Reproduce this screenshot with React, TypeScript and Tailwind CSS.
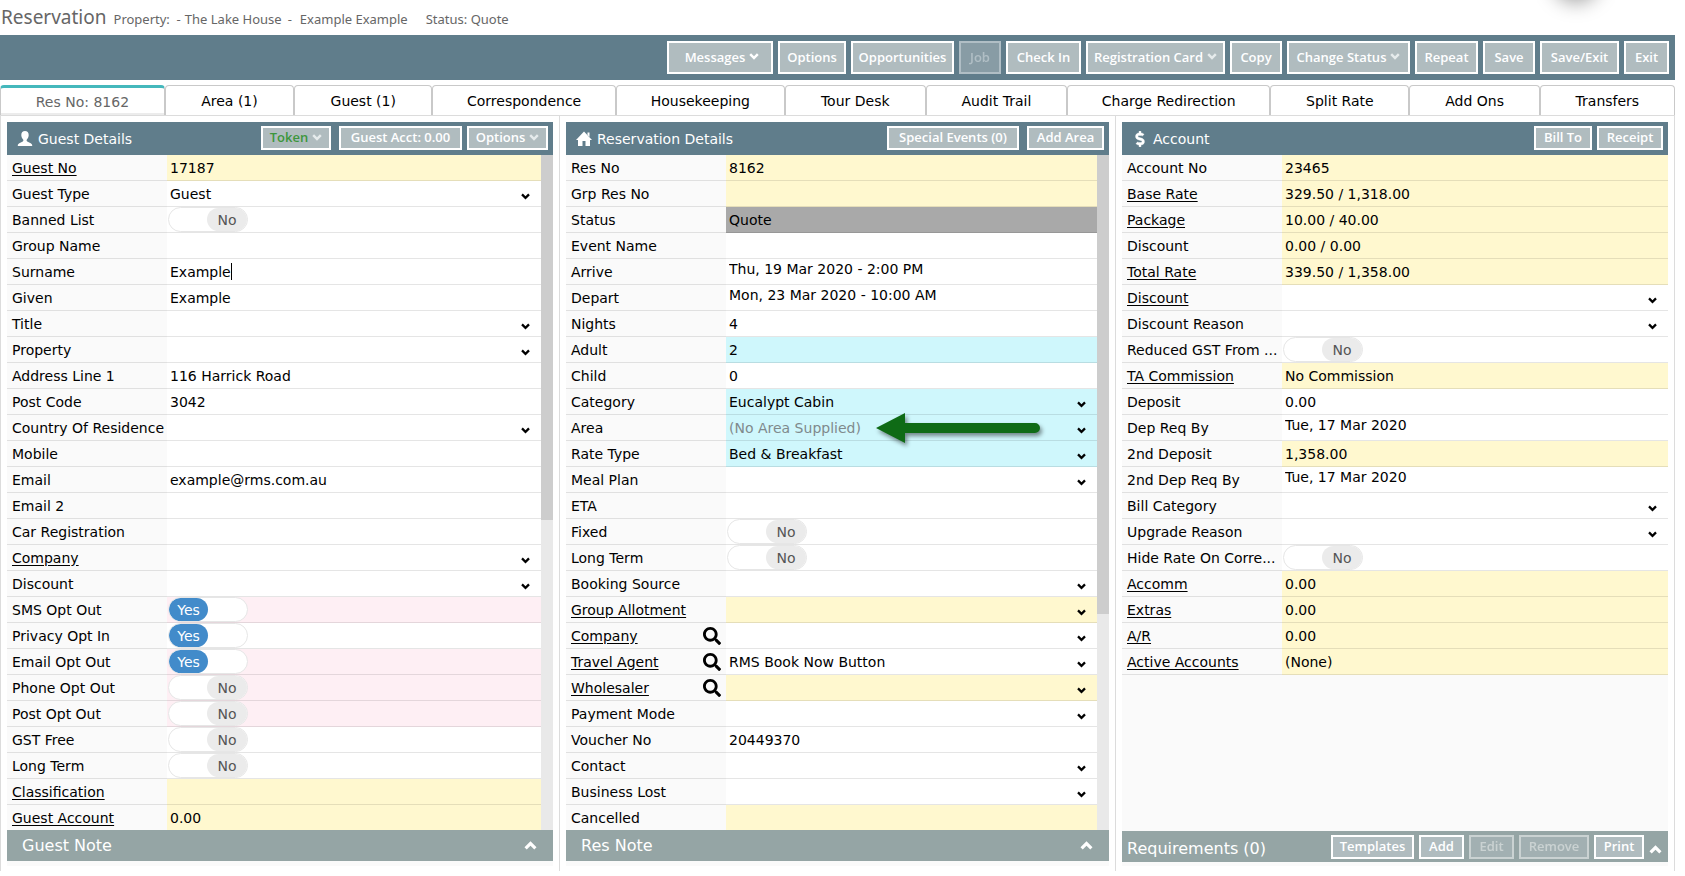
import React, { useId } from 'react';
import { FaDollarSign, FaSearch } from 'react-icons/fa';
import clsx from 'clsx';

type Tone = 'plain' | 'yellow' | 'cyan' | 'gray' | 'pink';

interface Field {
  label: string;
  value?: string;
  kind?: 'text' | 'select' | 'toggle' | 'date' | 'readonly';
  tone?: Tone;
  link?: boolean;
  on?: boolean;
  search?: boolean;
  muted?: boolean;
  caret?: boolean;
  arrow?: boolean;
}

const tones: Record<Tone, string> = {
  plain: 'bg-white',
  yellow: 'bg-[#fff8cf]',
  cyan: 'bg-[#cff7fc]',
  gray: 'bg-[#a9a9a9]',
  pink: 'bg-[#feeff4]',
};

const guestFields: Field[] = [
  { label: 'Guest No', value: '17187', kind: 'readonly', tone: 'yellow', link: true },
  { label: 'Guest Type', value: 'Guest', kind: 'select' },
  { label: 'Banned List', kind: 'toggle' },
  { label: 'Group Name' },
  { label: 'Surname', value: 'Example', caret: true },
  { label: 'Given', value: 'Example' },
  { label: 'Title', kind: 'select' },
  { label: 'Property', kind: 'select' },
  { label: 'Address Line 1', value: '116 Harrick Road' },
  { label: 'Post Code', value: '3042' },
  { label: 'Country Of Residence', kind: 'select' },
  { label: 'Mobile' },
  { label: 'Email', value: 'example@rms.com.au' },
  { label: 'Email 2' },
  { label: 'Car Registration' },
  { label: 'Company', kind: 'select', link: true },
  { label: 'Discount', kind: 'select' },
  { label: 'SMS Opt Out', kind: 'toggle', on: true, tone: 'pink' },
  { label: 'Privacy Opt In', kind: 'toggle', on: true },
  { label: 'Email Opt Out', kind: 'toggle', on: true, tone: 'pink' },
  { label: 'Phone Opt Out', kind: 'toggle', tone: 'pink' },
  { label: 'Post Opt Out', kind: 'toggle', tone: 'pink' },
  { label: 'GST Free', kind: 'toggle' },
  { label: 'Long Term', kind: 'toggle' },
  { label: 'Classification', kind: 'readonly', tone: 'yellow', link: true },
  { label: 'Guest Account', value: '0.00', kind: 'readonly', tone: 'yellow', link: true },
];

const reservationFields: Field[] = [
  { label: 'Res No', value: '8162', kind: 'readonly', tone: 'yellow' },
  { label: 'Grp Res No', kind: 'readonly', tone: 'yellow' },
  { label: 'Status', value: 'Quote', kind: 'readonly', tone: 'gray' },
  { label: 'Event Name' },
  { label: 'Arrive', value: 'Thu, 19 Mar 2020 - 2:00 PM', kind: 'date' },
  { label: 'Depart', value: 'Mon, 23 Mar 2020 - 10:00 AM', kind: 'date' },
  { label: 'Nights', value: '4' },
  { label: 'Adult', value: '2', tone: 'cyan' },
  { label: 'Child', value: '0' },
  { label: 'Category', value: 'Eucalypt Cabin', kind: 'select', tone: 'cyan' },
  { label: 'Area', value: '(No Area Supplied)', kind: 'select', tone: 'cyan', muted: true, arrow: true },
  { label: 'Rate Type', value: 'Bed & Breakfast', kind: 'select', tone: 'cyan' },
  { label: 'Meal Plan', kind: 'select' },
  { label: 'ETA' },
  { label: 'Fixed', kind: 'toggle' },
  { label: 'Long Term', kind: 'toggle' },
  { label: 'Booking Source', kind: 'select' },
  { label: 'Group Allotment', kind: 'select', tone: 'yellow', link: true },
  { label: 'Company', kind: 'select', link: true, search: true },
  { label: 'Travel Agent', value: 'RMS Book Now Button', kind: 'select', link: true, search: true },
  { label: 'Wholesaler', kind: 'select', tone: 'yellow', link: true, search: true },
  { label: 'Payment Mode', kind: 'select' },
  { label: 'Voucher No', value: '20449370' },
  { label: 'Contact', kind: 'select' },
  { label: 'Business Lost', kind: 'select' },
  { label: 'Cancelled', kind: 'readonly', tone: 'yellow' },
];

const accountFields: Field[] = [
  { label: 'Account No', value: '23465', kind: 'readonly', tone: 'yellow' },
  { label: 'Base Rate', value: '329.50 / 1,318.00', kind: 'readonly', tone: 'yellow', link: true },
  { label: 'Package', value: '10.00 / 40.00', kind: 'readonly', tone: 'yellow', link: true },
  { label: 'Discount', value: '0.00 / 0.00', kind: 'readonly', tone: 'yellow' },
  { label: 'Total Rate', value: '339.50 / 1,358.00', kind: 'readonly', tone: 'yellow', link: true },
  { label: 'Discount', kind: 'select', link: true },
  { label: 'Discount Reason', kind: 'select' },
  { label: 'Reduced GST From ...', kind: 'toggle' },
  { label: 'TA Commission', value: 'No Commission', kind: 'readonly', tone: 'yellow', link: true },
  { label: 'Deposit', value: '0.00' },
  { label: 'Dep Req By', value: 'Tue, 17 Mar 2020', kind: 'date' },
  { label: '2nd Deposit', value: '1,358.00', kind: 'readonly', tone: 'yellow' },
  { label: '2nd Dep Req By', value: 'Tue, 17 Mar 2020', kind: 'date' },
  { label: 'Bill Category', kind: 'select' },
  { label: 'Upgrade Reason', kind: 'select' },
  { label: 'Hide Rate On Corre...', kind: 'toggle' },
  { label: 'Accomm', value: '0.00', kind: 'readonly', tone: 'yellow', link: true },
  { label: 'Extras', value: '0.00', kind: 'readonly', tone: 'yellow', link: true },
  { label: 'A/R', value: '0.00', kind: 'readonly', tone: 'yellow', link: true },
  { label: 'Active Accounts', value: '(None)', kind: 'readonly', tone: 'yellow', link: true },
];

const tabs = [
  { label: 'Res No: 8162', grow: 'grow-[165]' },
  { label: 'Area (1)', grow: 'grow-[129]' },
  { label: 'Guest (1)', grow: 'grow-[138]' },
  { label: 'Correspondence', grow: 'grow-[184]' },
  { label: 'Housekeeping', grow: 'grow-[169]' },
  { label: 'Tour Desk', grow: 'grow-[141]' },
  { label: 'Audit Trail', grow: 'grow-[141]' },
  { label: 'Charge Redirection', grow: 'grow-[204]' },
  { label: 'Split Rate', grow: 'grow-[139]' },
  { label: 'Add Ons', grow: 'grow-[130]' },
  { label: 'Transfers', grow: 'grow-[135]' },
];

interface ActionProps {
  label: string;
  width: string;
  menu?: boolean;
  disabled?: boolean;
  tall?: boolean;
  green?: boolean;
}

const toolbar: ActionProps[] = [
  { label: 'Messages', width: 'w-[106px] pl-1', menu: true },
  { label: 'Options', width: 'w-[68px]' },
  { label: 'Opportunities', width: 'w-[103px]' },
  { label: 'Job', width: 'w-[42px]', disabled: true },
  { label: 'Check In', width: 'w-[75px]' },
  { label: 'Registration Card', width: 'w-[139px]', menu: true },
  { label: 'Copy', width: 'w-[52px]' },
  { label: 'Change Status', width: 'w-[123px]', menu: true },
  { label: 'Repeat', width: 'w-[63px]' },
  { label: 'Save', width: 'w-[52px]' },
  { label: 'Save/Exit', width: 'w-[79px]' },
  { label: 'Exit', width: 'w-[45px]' },
];

function Chevron({ className }: { className?: string }) {
  return (
    <svg viewBox="0 0 14 10" className={className} fill="currentColor" aria-hidden="true">
      <path d="M.3 3 2.800.500 7 4.600 11.200.500 13.700 3 7 9.700z" />
    </svg>
  );
}

function Action({ label, width, menu, disabled, tall, green }: ActionProps) {
  return (
    <button
      type="button"
      disabled={disabled}
      className={clsx(
        'flex shrink-0 items-center justify-center gap-1 border-2 border-white bg-[#b0bcbf] pb-0.5 font-["Open_Sans",sans-serif] text-[13px] leading-4 font-semibold whitespace-nowrap',
        tall ? 'h-[33px]' : 'h-6',
        green ? 'text-[#3c963c]' : 'text-white',
        disabled && 'opacity-50',
        width,
      )}
    >
      {label}
      {menu && <Chevron className={clsx('h-[7px] w-2.5', label === 'Messages' ? 'text-white' : 'text-[#e6ebec]')} />}
    </button>
  );
}

function Toggle({ id, on }: { id: string; on?: boolean }) {
  return (
    <label className="ml-px flex h-[25px] w-20 cursor-pointer overflow-hidden rounded-full border border-[#e6e6e6] bg-white">
      <input id={id} type="checkbox" defaultChecked={on} className="peer sr-only" />
      <span className="hidden w-[39px] items-center justify-center rounded-full bg-[#428bca] text-white peer-checked:flex">
        Yes
      </span>
      <span className="ml-auto flex w-10 items-center justify-center rounded-full bg-[#ebebeb] text-[#555] peer-checked:hidden">
        No
      </span>
    </label>
  );
}

function PointerArrow() {
  return (
    <svg
      viewBox="0 0 170 38"
      className="pointer-events-none absolute -top-0.5 left-[150px] z-10 h-[38px] w-[170px] drop-shadow-[2px_3px_2px_rgba(0,0,0,0.45)]"
      aria-hidden="true"
    >
      <path d="M0 15 29 0v10h130a5 5 0 0 1 0 10H29v10z" fill="#0f6b16" />
    </svg>
  );
}

function FieldRow({ field }: { field: Field }) {
  const id = useId();
  const { label, value = '', kind = 'text', tone = 'plain' } = field;
  const box = 'h-full min-w-0 bg-transparent pl-[3px] outline-none';

  return (
    <div className="flex h-[26px] shrink-0">
      <div className="flex w-40 shrink-0 items-center justify-between border-b border-black/10 bg-[#fafafa] px-[5px] whitespace-nowrap">
        <label htmlFor={id}>
          {field.link ? (
            <a href="#" className="underline underline-offset-2">
              {label}
            </a>
          ) : (
            label
          )}
        </label>
        {field.search && (
          <button type="button" aria-label={`Search ${label}`}>
            <FaSearch className="size-[18px]" />
          </button>
        )}
      </div>
      <div className={clsx('relative flex min-w-0 flex-1 items-center border-b border-black/10', tones[tone])}>
        {kind === 'toggle' && <Toggle id={id} on={field.on} />}
        {kind === 'select' && (
          <>
            <select
              id={id}
              defaultValue={value}
              className={clsx(box, 'w-full appearance-none', field.muted && 'text-[#7f8a8c]')}
            >
              <option value={value}>{value}</option>
            </select>
            <Chevron className="pointer-events-none absolute top-3 right-[11px] h-[7px] w-[9px]" />
          </>
        )}
        {(kind === 'text' || kind === 'readonly' || kind === 'date') && (
          <input
            id={id}
            type="text"
            defaultValue={value}
            readOnly={kind === 'readonly'}
            className={clsx(box, field.caret ? 'field-sizing-content' : 'w-full', kind === 'date' && 'pb-1.5')}
          />
        )}
        {field.caret && <span className="h-[17px] w-px bg-black" />}
        {field.arrow && <PointerArrow />}
      </div>
    </div>
  );
}

interface PanelProps {
  title: string;
  icon: React.ReactNode;
  actions: React.ReactNode;
  fields: Field[];
  thumb?: string;
  footer: React.ReactNode;
}

function Panel({ title, icon, actions, fields, thumb, footer }: PanelProps) {
  return (
    <section className="flex min-h-0 min-w-0 flex-col border-r border-[#dcdcdc] px-1.5 pt-1.5">
      <header className="flex h-[33px] shrink-0 items-center justify-between bg-[#607d8b] pr-[5px] pl-2.5 text-white">
        <div className="flex items-center gap-[5px]">
          {icon}
          <h2>{title}</h2>
        </div>
        <div className="flex pb-px">{actions}</div>
      </header>
      <div className="flex min-h-0 flex-1 bg-[#fafafa]">
        <div className="flex min-w-0 flex-1 flex-col overflow-hidden">
          {fields.map((field, index) => (
            <FieldRow key={index} field={field} />
          ))}
        </div>
        {thumb && (
          <div className="w-3 shrink-0 bg-[#e9e9e9]">
            <div className={clsx('bg-[#cdcdcd]', thumb)} />
          </div>
        )}
      </div>
      {footer}
    </section>
  );
}

function NoteBar({ title }: { title: string }) {
  return (
    <>
      <button
        type="button"
        className="flex h-[31px] shrink-0 items-center justify-between bg-[#95a5a5] pr-4 pl-[15px] text-base text-white"
      >
        <span>{title}</span>
        <Chevron className="h-[9px] w-[13px] rotate-180" />
      </button>
      <div className="mb-[5px] h-[5px] shrink-0 bg-[#fafafa]" />
    </>
  );
}

function UserIcon() {
  return (
    <svg viewBox="0 0 16 16" className="size-4" fill="currentColor" aria-hidden="true">
      <path d="M8 0c2.300 0 3.700 1.600 3.700 4 0 1.700-.7 3.500-1.800 4.500-.5.500-.4 1.500.3 1.900l3.500 1.800c.9.500 1.500 1.200 1.500 2.100V15H.8v-.7c0-.9.6-1.600 1.500-2.100l3.500-1.800c.7-.4.8-1.400.3-1.900C5 7.500 4.300 5.700 4.300 4 4.300 1.600 5.700 0 8 0z" />
    </svg>
  );
}

function HomeIcon() {
  return (
    <svg viewBox="0 0 16 16" className="size-4" fill="currentColor" aria-hidden="true">
      <path d="M8 .5 16 9h-2v6H9.500v-5h-3v5H2V9H0l8-8.500z" />
      <path d="M11.500 1.500h2V6l-2-2z" />
    </svg>
  );
}

export default function App() {
  return (
    <div className="relative flex h-screen min-h-[640px] flex-col overflow-hidden bg-white pr-2.5 pb-[5px] font-['DejaVu_Sans',sans-serif] text-sm leading-5 text-black">
      {/* Title */}
      <div className="flex h-[35px] shrink-0 items-baseline pt-[5px] pl-px font-['Noto_Sans',sans-serif] text-[13px] text-[#666]">
        <h1 className="mr-[7px] text-[19px] leading-6">Reservation</h1>
        <span>Property: &nbsp;-</span>
        <span className="ml-1">The Lake House</span>
        <span className="ml-1.5">-</span>
        <span className="ml-2">Example Example</span>
        <span className="ml-[18px]">Status: Quote</span>
      </div>
      <div className="absolute -top-12 right-[86px] size-[46px] rounded-full shadow-[0_4px_20px_rgba(0,0,0,0.4)]" />

      {/* Toolbar */}
      <div className="flex h-[45px] shrink-0 items-center justify-end gap-[5px] bg-[#607d8b] pr-1.5">
        {toolbar.map((item) => (
          <Action key={item.label} {...item} tall />
        ))}
      </div>

      {/* Tabs */}
      <nav className="mt-[5px] flex h-[31px] shrink-0 border-b border-[#dcdcdc]">
        {tabs.map((tab, index) => (
          <button
            key={tab.label}
            type="button"
            className={clsx(
              'min-w-0 basis-0 rounded-t border border-b-0 border-[#c9c9c9] whitespace-nowrap',
              tab.grow,
              index === 0 && 'border-t-3 border-t-[#45b8bc] text-[#666] shadow-[inset_0_-2px_0_#ececec]',
            )}
          >
            {tab.label}
          </button>
        ))}
      </nav>

      {/* Panels */}
      <main className="grid min-h-0 flex-1 grid-cols-[559fr_556fr_559fr] border-l border-[#dcdcdc]">
        <Panel
          title="Guest Details"
          icon={<UserIcon />}
          fields={guestFields}
          thumb="h-[54%]"
          actions={
            <>
              <Action label="Token" width="mr-2 w-[70px]" menu green />
              <Action label="Guest Acct: 0.00" width="mr-[5px] w-[123px]" />
              <Action label="Options" width="w-[81px]" menu />
            </>
          }
          footer={<NoteBar title="Guest Note" />}
        />
        <Panel
          title="Reservation Details"
          icon={<HomeIcon />}
          fields={reservationFields}
          thumb="h-[68%]"
          actions={
            <>
              <Action label="Special Events (0)" width="mr-2 w-[132px]" />
              <Action label="Add Area" width="w-[77px]" />
            </>
          }
          footer={<NoteBar title="Res Note" />}
        />
        <Panel
          title="Account"
          icon={<FaDollarSign className="size-4 stroke-current stroke-[12]" />}
          fields={accountFields}
          actions={
            <>
              <Action label="Bill To" width="mr-[5px] w-[58px]" />
              <Action label="Receipt" width="w-[66px]" />
            </>
          }
          footer={
            <>
              <div className="flex h-[31px] shrink-0 items-center gap-[5px] bg-[#95a5a5] pt-px pr-1.5 pl-[5px] text-white">
                <h2 className="mr-auto pt-1 text-base">Requirements (0)</h2>
                <Action label="Templates" width="w-[83px]" />
                <Action label="Add" width="w-[45px]" />
                <Action label="Edit" width="w-[45px]" disabled />
                <Action label="Remove" width="w-[70px]" disabled />
                <Action label="Print" width="w-[50px]" />
                <button type="button" aria-label="Expand requirements" className="pt-1">
                  <Chevron className="h-[9px] w-[13px] rotate-180" />
                </button>
              </div>
              <div className="mb-[5px] h-1 shrink-0 bg-[#fafafa]" />
            </>
          }
        />
      </main>
    </div>
  );
}
